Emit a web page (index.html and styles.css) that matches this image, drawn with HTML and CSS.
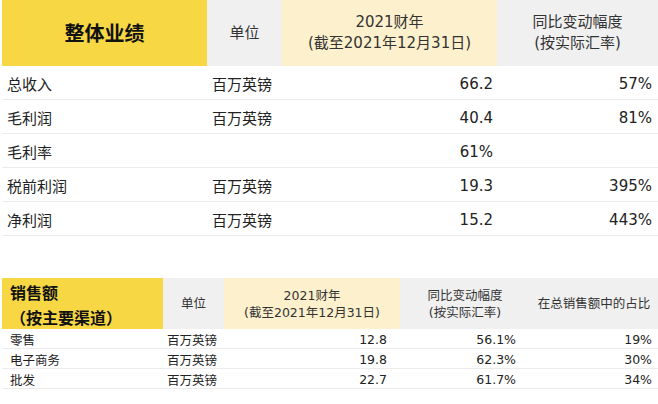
FILE: index.html
```html
<!DOCTYPE html>
<html lang="zh">
<head>
<meta charset="utf-8">
<link rel="stylesheet" href="styles.css">
</head>
<body>
<div class="page">
  <div class="tbl tbl-main">
    <div class="hd hd-title">整体业绩</div>
    <div class="hd hd-gray">单位</div>
    <div class="hd hd-light">2021财年<br>(截至2021年12月31日)</div>
    <div class="hd hd-gray">同比变动幅度<br>(按实际汇率)</div>

    <div class="c lbl">总收入</div><div class="c unit">百万英镑</div><div class="c num">66.2</div><div class="c pct">57%</div>
    <div class="c lbl">毛利润</div><div class="c unit">百万英镑</div><div class="c num">40.4</div><div class="c pct">81%</div>
    <div class="c lbl">毛利率</div><div class="c unit"></div><div class="c num">61%</div><div class="c pct"></div>
    <div class="c lbl">税前利润</div><div class="c unit">百万英镑</div><div class="c num">19.3</div><div class="c pct">395%</div>
    <div class="c lbl">净利润</div><div class="c unit">百万英镑</div><div class="c num">15.2</div><div class="c pct">443%</div>
  </div>

  <div class="tbl tbl-sales">
    <div class="hd hd-title2">销售额<br>（按主要渠道）</div>
    <div class="hd hd-gray">单位</div>
    <div class="hd hd-light">2021财年<br>(截至2021年12月31日)</div>
    <div class="hd hd-gray">同比变动幅度<br>(按实际汇率)</div>
    <div class="hd hd-gray">在总销售额中的占比</div>

    <div class="c lbl">零售</div><div class="c unit">百万英镑</div><div class="c num">12.8</div><div class="c pct1">56.1%</div><div class="c pct">19%</div>
    <div class="c lbl">电子商务</div><div class="c unit">百万英镑</div><div class="c num">19.8</div><div class="c pct1">62.3%</div><div class="c pct">30%</div>
    <div class="c lbl">批发</div><div class="c unit">百万英镑</div><div class="c num">22.7</div><div class="c pct1">61.7%</div><div class="c pct">34%</div>
  </div>
</div>
</body>
</html>
```

FILE: styles.css
```css
* { box-sizing: border-box; }
html, body { margin: 0; padding: 0; background: #fff; }
body {
  font-family: "DejaVu Sans", "Noto Sans CJK SC", sans-serif;
  color: #222;
  width: 658px;
  height: 404px;
  overflow: hidden;
}
.page { padding-left: 2px; }

.tbl { display: grid; }

.tbl-main {
  grid-template-columns: 205px 75px 215px 161px;
  grid-template-rows: 66px repeat(5, 34px);
  font-size: 15px;
}
.tbl-sales {
  margin-top: 42px;
  grid-template-columns: 161px 61px 176px 130px 128px;
  grid-template-rows: 51px repeat(3, 20px);
  font-size: 12.5px;
}

.hd {
  display: flex;
  align-items: center;
  justify-content: center;
  text-align: center;
  line-height: 21px;
  color: #333;
}
.tbl-sales .hd { line-height: 17px; font-size: 12.5px; }

.hd-title {
  background: #f7d744;
  font-weight: 700;
  font-size: 20px;
  color: #111;
  padding-top: 2px;
}
.hd-title2 {
  background: #f7d744;
  font-weight: 700;
  color: #111;
  justify-content: flex-start;
  text-align: left;
  padding: 5px 0 0 8px;
}
.tbl-sales .hd-title2 { font-size: 16px; line-height: 25px; }
.hd-gray { background: #f0f0f0; }
.hd-light { background: #fdf0cc; }

.c {
  display: flex;
  align-items: center;
  border-bottom: 1px solid #ececec;
  white-space: nowrap;
  padding-top: 2px;
}
.tbl-sales .c { padding-top: 1px; }
.lbl { padding-left: 5px; }
.unit { padding-left: 5px; }
.num { justify-content: flex-end; padding-right: 4px; }
.pct { justify-content: flex-end; padding-right: 6px; }

.tbl-sales .lbl { padding-left: 8px; }
.tbl-sales .unit { padding-left: 4px; }
.tbl-sales .num { padding-right: 13px; }
.pct1 { justify-content: flex-end; padding-right: 14px; }
```
